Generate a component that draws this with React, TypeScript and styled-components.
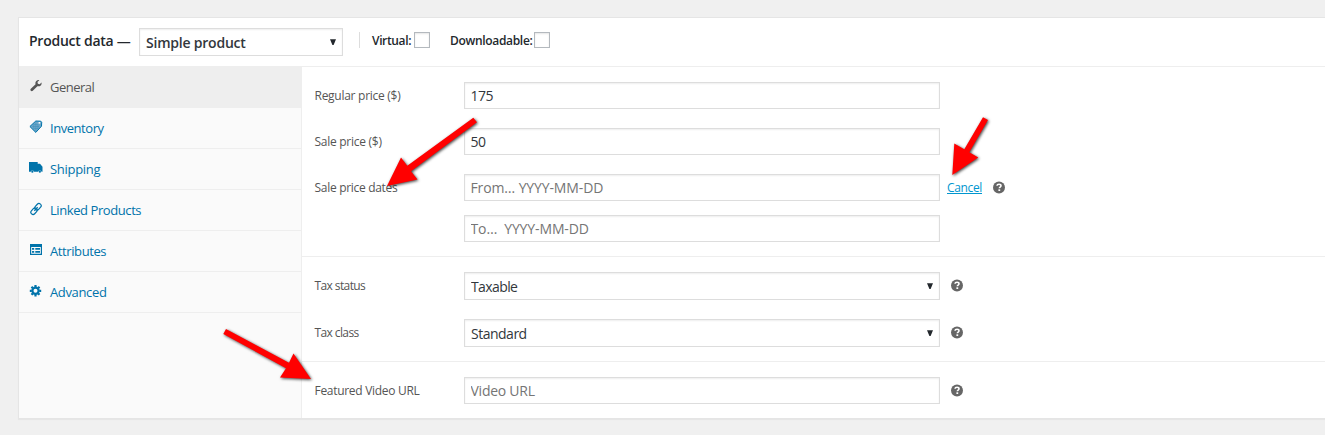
import React from 'react';
import styled, { createGlobalStyle } from 'styled-components';

const GlobalStyle = createGlobalStyle`
  * { box-sizing: border-box; }
  body { margin: 0; background: #f0f0f0; }
`;

const Page = styled.div`
  position: relative;
  height: 435px;
  padding: 17px 0 0 18px;
  overflow: hidden;
  font-family: "Open Sans", "Noto Sans", sans-serif;
  font-size: 13px;
  color: #444;
`;

const Panel = styled.section`
  height: 402px;
  display: flex;
  flex-direction: column;
  background: #fff;
  border: 1px solid #e5e5e5;
  border-right: 0;
  box-shadow: 0 1px 1px rgba(0, 0, 0, 0.04);
`;

const Header = styled.header`
  display: flex;
  height: 49px;
  flex: none;
  padding: 10px 0 0 10px;
  border-bottom: 1px solid #eee;
  color: #23282d;
`;

const Title = styled.h2`
  width: 110px;
  margin: 0;
  font-size: 14px;
  font-weight: 560;
  line-height: 25px;
  white-space: nowrap;
  letter-spacing: -0.25px;
`;

const SelectBox = styled.div<{ $width: number }>`
  position: relative;
  width: ${(p) => p.$width}px;
  height: 28px;
  flex: none;
`;

const NativeSelect = styled.select<{ $strong?: boolean; $ls: number }>`
  appearance: none;
  width: 100%;
  height: 28px;
  padding: 1px 20px 0 6px;
  border: 1px solid #ddd;
  border-radius: 0;
  background: #fff;
  box-shadow: inset 0 1px 2px rgba(0, 0, 0, 0.07);
  color: #32373c;
  font-family: inherit;
  font-size: 14px;
  font-weight: ${(p) => (p.$strong ? 560 : 400)};
  letter-spacing: ${(p) => p.$ls}px;
`;

const Caret = styled.svg`
  position: absolute;
  right: 7px;
  top: 11px;
  width: 6px;
  height: 6px;
  fill: #23282d;
  pointer-events: none;
`;

const Flags = styled.div`
  display: flex;
  gap: 20px;
  height: 16px;
  margin: 4px 0 0 16px;
  padding-left: 12px;
  border-left: 1px solid #ddd;
`;

const Flag = styled.label<{ $width: number; $ls: number }>`
  display: flex;
  justify-content: space-between;
  width: ${(p) => p.$width}px;
  font-size: 12px;
  font-weight: 560;
  line-height: 18px;
  white-space: nowrap;
  letter-spacing: ${(p) => p.$ls}px;
`;

const Checkbox = styled.input`
  appearance: none;
  width: 16px;
  height: 16px;
  flex: none;
  margin: 0;
  border: 1px solid #b4b9be;
  background: #fff;
  box-shadow: inset 0 1px 2px rgba(0, 0, 0, 0.1);
`;

const Body = styled.div`
  display: flex;
  flex: 1;
`;

const Tabs = styled.nav`
  width: 283px;
  flex: none;
  background: linear-gradient(to right, #fafafa 282px, #eee 282px);
`;

const Tab = styled.a<{ $active?: boolean; $ls: number }>`
  display: flex;
  align-items: flex-start;
  gap: 7px;
  height: 41px;
  padding: 10px 0 0 10px;
  border-bottom: 1px solid #eee;
  background: ${(p) => (p.$active ? '#eee' : 'transparent')};
  color: ${(p) => (p.$active ? '#555' : '#0073aa')};
  font-size: 13px;
  line-height: 20px;
  letter-spacing: ${(p) => p.$ls}px;
  text-decoration: none;

  svg {
    width: 14px;
    height: 14px;
    margin-top: 2px;
    fill: currentColor;
  }
`;

const Fields = styled.div`
  flex: 1;
`;

const Group = styled.div<{ $height: number; $top: number; $gap: number }>`
  display: flex;
  flex-direction: column;
  gap: ${(p) => p.$gap}px;
  height: ${(p) => p.$height}px;
  padding: ${(p) => p.$top}px 0 0 12px;

  & + & { border-top: 1px solid #eee; }
`;

const Row = styled.div`
  display: flex;
  align-items: flex-start;
`;

const Label = styled.label<{ $ls: number }>`
  width: 150px;
  flex: none;
  padding-left: 0.5px;
  font-size: 12px;
  line-height: 27px;
  color: #555;
  white-space: nowrap;
  letter-spacing: ${(p) => p.$ls}px;
`;

const Stack = styled.div`
  display: flex;
  flex-direction: column;
  gap: 14px;
`;

const Input = styled.input<{ $ls?: number }>`
  width: 476px;
  height: 27px;
  padding: 0 5px 0 5.5px;
  border: 1px solid #ddd;
  background: #fff;
  box-shadow: inset 0 1px 2px rgba(0, 0, 0, 0.07);
  color: #32373c;
  font-family: inherit;
  font-size: 14px;
  letter-spacing: ${(p) => p.$ls ?? -0.12}px;

  &::placeholder { color: #757575; opacity: 1; }
`;

const Cancel = styled.a`
  width: 35px;
  margin: 0 0 0 7px;
  font-size: 12px;
  line-height: 27px;
  letter-spacing: -0.35px;
  color: #0096cf;
  text-decoration: underline;
  text-underline-offset: 1px;
`;

const HelpIcon = styled.svg`
  width: 12px;
  height: 13px;
  margin: 7px 0 0 11px;
`;

const Arrows = styled.svg`
  position: absolute;
  left: 0;
  top: 0;
  fill: #f00;
  pointer-events: none;
  filter: drop-shadow(1px 1px 1.5px rgba(0, 0, 0, 0.75));
`;

const Help = () => (
  <HelpIcon viewBox="0 -0.5 12 13">
    <circle cx="6" cy="6" r="6" fill="#666" />
    <path d="M4 4.300C4.100 3.200 4.900 2.800 6 2.800s2 .5 2 1.500c0 1.300-1.700 1.300-1.700 2.500" fill="none" stroke="#fff" strokeWidth="1.600" />
    <rect x="5.400" y="7.800" width="1.800" height="1.700" fill="#fff" />
  </HelpIcon>
);

type SelectProps = { width: number; value: string; strong?: boolean; ls: number };

const Select = ({ width, value, strong, ls }: SelectProps) => (
  <SelectBox $width={width}>
    <NativeSelect $strong={strong} $ls={ls} defaultValue={value}>
      <option>{value}</option>
    </NativeSelect>
    <Caret viewBox="0 0 6 6"><path d="M0 0.200h6L3.600 6h-1.200z" /></Caret>
  </SelectBox>
);

const icons = {
  wrench: (
    <svg viewBox="0 0 20 20"><path d="M16.7 9.3c-1.3 1.3-3.1 1.5-4.7.9L5.400 16.800c-.8.8-2 .8-2.800 0s-.8-2 0-2.800L9.400 7.500c-.6-1.600-.2-3.400 1-4.600C11.600 1.700 13.200 1.300 14.700 1.700L12.100 4.400l.6 2.500 2.600.6 2.500-2.600c.5 1.500.1 3.200-1.100 4.400z" /></svg>
  ),
  tag: (
    <svg viewBox="0 0 14 14">
      <path d="M0.900 6.500 6.800 1l5 .2.900 1-.2 4L6.800 12.400z" fill="#6aa6c9" stroke="#0073aa" strokeWidth="1" />
      <path d="M3 6.500h7M4.500 8.500h4.500M4.500 4.500h4M6.800 2.500v8.500M4.700 4.500v4M8.900 4v5" stroke="#3f90bb" strokeWidth="0.500" />
      <path d="M9.600 2h1.600v1.600H9.600z" fill="#fff" />
    </svg>
  ),
  truck: (
    <svg viewBox="0 0 14 14">
      <path d="M0 1h8.700v1.800H11l2.500 2.900v5h-1a1.700 1.700 0 0 0-3.300 0H5a1.700 1.700 0 0 0-3.300 0H0z" />
      <circle cx="3.350" cy="10.700" r="1.100" /><circle cx="10.850" cy="10.700" r="1.100" />
    </svg>
  ),
  link: (
    <svg viewBox="0 0 14 14">
      <g transform="rotate(-48 7 7)" fill="none" stroke="currentColor" strokeWidth="1.200">
        <rect x="0.400" y="4.800" width="7.300" height="4.400" rx="2.200" />
        <rect x="6.300" y="4.800" width="7.300" height="4.400" rx="2.200" />
        <path d="M4.500 7h5" />
      </g>
    </svg>
  ),
  form: (
    <svg viewBox="0 0 14 14">
      <path fillRule="evenodd" d="M1 1h12v11H1zM2.200 4v6.800h9.600V4z" />
      <path d="M3 5h2.200v1.700H3zM6.300 5H11v1.700H6.300zM3 8h2.200v1.700H3zM6.300 8H11v1.700H6.300z" />
    </svg>
  ),
  gear: (
    <svg viewBox="0 0 14 14">
      <circle cx="6.500" cy="6.800" r="3.100" fill="none" stroke="currentColor" strokeWidth="2.200" />
      <g stroke="currentColor" strokeWidth="2.200">
        <path d="M6.500 1.100v2M6.500 10.500v2M.8 6.800h2M10.200 6.800h2M2.500 2.800l1.400 1.400M9.100 9.400l1.400 1.400M2.500 10.800l1.400-1.400M9.100 4.200l1.400-1.400" />
      </g>
    </svg>
  ),
};

const tabs: { label: string; icon: keyof typeof icons; ls: number }[] = [
  { label: 'General', icon: 'wrench', ls: -0.5 },
  { label: 'Inventory', icon: 'tag', ls: -0.45 },
  { label: 'Shipping', icon: 'truck', ls: -0.3 },
  { label: 'Linked Products', icon: 'link', ls: -0.42 },
  { label: 'Attributes', icon: 'form', ls: -0.4 },
  { label: 'Advanced', icon: 'gear', ls: -0.35 },
];

export default function App() {
  return (
    <>
      <GlobalStyle />
      <Page>
        <Panel>
          <Header>
            <Title>Product data —</Title>
            <Select width={204} value="Simple product" strong ls={-0.22} />
            <Flags>
              <Flag $width={58} $ls={-0.35}>Virtual:<Checkbox type="checkbox" /></Flag>
              <Flag $width={100} $ls={-0.32}>Downloadable:<Checkbox type="checkbox" /></Flag>
            </Flags>
          </Header>
          <Body>
            <Tabs>
              {tabs.map((t, i) => (
                <Tab key={t.label} $active={i === 0} $ls={t.ls}>
                  {icons[t.icon]}
                  <span>{t.label}</span>
                </Tab>
              ))}
            </Tabs>
            <Fields>
              <Group $height={189} $top={15} $gap={19}>
                <Row><Label $ls={-0.27}>Regular price ($)</Label><Input defaultValue="175" $ls={-0.5} /></Row>
                <Row><Label $ls={-0.27}>Sale price ($)</Label><Input defaultValue="50" $ls={-0.5} /></Row>
                <Row>
                  <Label $ls={-0.3}>Sale price dates</Label>
                  <Stack>
                    <Input placeholder="From… YYYY-MM-DD" />
                    <Input placeholder="To…  YYYY-MM-DD" />
                  </Stack>
                  <Cancel>Cancel</Cancel>
                  <Help />
                </Row>
              </Group>
              <Group $height={105} $top={15} $gap={19}>
                <Row><Label $ls={-0.6}>Tax status</Label><Select width={476} value="Taxable" ls={-0.6} /><Help /></Row>
                <Row><Label $ls={-0.6}>Tax class</Label><Select width={476} value="Standard" ls={-0.5} /><Help /></Row>
              </Group>
              <Group $height={57} $top={15} $gap={0}>
                <Row><Label $ls={-0.3}>Featured Video URL</Label><Input placeholder="Video URL" $ls={-0.25} /><Help /></Row>
              </Group>
            </Fields>
          </Body>
        </Panel>
        <Arrows width="1325" height="435" viewBox="0 0 1325 435">
          <path d="M387 186 401 157.500 407.300 165.800 473.300 117.800 477 122.300 411 171.300 417.500 179.500z" />
          <path d="M952.300 175 954.300 143.500 964.300 149.300 983 117.300 988 120 969.300 152.300 978.300 157.500z" />
          <path d="M311 379 293.500 353.500 289 362.800 226 329 223.300 334 286 368.200 280 377.500z" />
        </Arrows>
      </Page>
    </>
  );
}
